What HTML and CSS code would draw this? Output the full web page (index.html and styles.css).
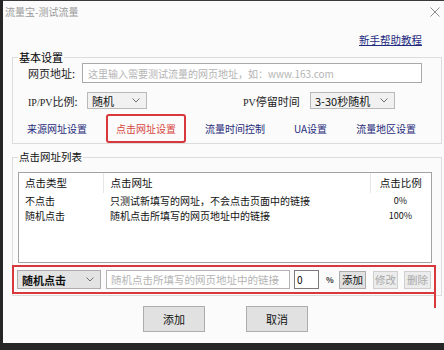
FILE: index.html
```html
<!DOCTYPE html>
<html lang="zh-CN">
  <head>
    <meta charset="UTF-8" />
    <title>流量宝-测试流量</title>
    <link rel="stylesheet" href="styles.css">
  </head>
  <body>
    <div class="window">
      <div class="titlebar">
        <span class="title">流量宝-测试流量</span>
        <svg class="close" width="10" height="10" viewBox="0 0 10 10" aria-label="关闭">
          <path d="M0.5 0.5L9.5 9.5M9.5 0.5L0.5 9.5" stroke="#8c8c8c" stroke-width="1" fill="none" />
        </svg>
      </div>

      <div class="help-row">
        <a href="#" class="help-link">新手帮助教程</a>
      </div>

      <fieldset class="group group-basic">
        <legend class="legend-basic">基本设置</legend>

        <div class="form-row row-url">
          <label for="url-input" class="field-label url-label">网页地址:</label>
          <input type="text" id="url-input" class="url-input" placeholder="这里输入需要测试流量的网页地址，如：www.163.com" />
        </div>

        <div class="form-row row-ratio">
          <label class="field-label ratio-label"><span class="latin">IP/PV</span>比例:</label>
          <div class="combo combo-ratio">
            <span>随机</span>
            <svg width="8" height="5" viewBox="0 0 8 5"><path d="M0.5 0.5L4 4L7.5 0.5" stroke="#707070" fill="none" /></svg>
          </div>
          <label class="field-label stay-label"><span class="latin">PV</span>停留时间</label>
          <div class="combo combo-stay">
            <span>3-30秒随机</span>
            <svg width="8" height="5" viewBox="0 0 8 5"><path d="M0.5 0.5L4 4L7.5 0.5" stroke="#707070" fill="none" /></svg>
          </div>
        </div>

        <div class="tabs">
          <a href="#" class="tab">来源网址设置</a>
          <a href="#" class="tab active">点击网址设置</a>
          <a href="#" class="tab">流量时间控制</a>
          <a href="#" class="tab">UA设置</a>
          <a href="#" class="tab">流量地区设置</a>
        </div>
      </fieldset>

      <fieldset class="group group-list">
        <legend>点击网址列表</legend>

        <div class="url-list">
          <table>
            <colgroup>
              <col class="col-type" />
              <col class="col-url" />
              <col class="col-rate" />
            </colgroup>
            <thead>
              <tr>
                <th class="cell-type">点击类型</th>
                <th class="cell-url">点击网址</th>
                <th class="cell-rate">点击比例</th>
              </tr>
            </thead>
            <tbody>
              <tr class="first-row">
                <td class="cell-type">不点击</td>
                <td class="cell-url">只测试新填写的网址，不会点击页面中的链接</td>
                <td class="cell-rate">0%</td>
              </tr>
              <tr>
                <td class="cell-type">随机点击</td>
                <td class="cell-url">随机点击所填写的网页地址中的链接</td>
                <td class="cell-rate">100%</td>
              </tr>
            </tbody>
          </table>
        </div>

        <div class="edit-row">
          <div class="combo combo-click">
            <span>随机点击</span>
            <svg width="8" height="5" viewBox="0 0 8 5"><path d="M0.5 0.5L4 4L7.5 0.5" stroke="#707070" fill="none" /></svg>
          </div>
          <input type="text" class="link-input" placeholder="随机点击所填写的网页地址中的链接" />
          <input type="text" class="rate-input" value="0" />
          <span class="percent">%</span>
          <button class="small-button add-button">添加</button>
          <button class="small-button edit-button" disabled>修改</button>
          <button class="small-button delete-button" disabled>删除</button>
        </div>
      </fieldset>

      <div class="dialog-buttons">
        <button class="dialog-button">添加</button>
        <button class="dialog-button">取消</button>
      </div>
    </div>
  </body>
</html>
```

FILE: styles.css
```css
* {
  box-sizing: border-box;
}

body {
  margin: 0;
  background: #262626;
  font-family: "Noto Sans CJK SC", "Liberation Sans", sans-serif;
  font-size: 10px;
  color: #111;
}

input,
button {
  font-family: inherit;
}

.window {
  margin-left: 3px;
  width: 441px;
  height: 343px;
  background: #fbfbfb;
  border-top: 1px solid #3a3a3a;
  overflow: hidden;
}

/* title bar */
.titlebar {
  height: 21px;
  display: flex;
  align-items: center;
  justify-content: space-between;
  padding: 0 4px 0 2px;
}

.title {
  color: #9a9a9a;
  font-size: 10px;
}

.help-row {
  height: 29px;
  padding: 12px 22px 0 0;
  text-align: right;
  line-height: 12px;
}

.help-link {
  color: #1f2b7e;
  font-size: 10.5px;
}

/* group boxes */
.group {
  margin: 0 0 0 9px;
  width: 430px;
  min-width: 0;
  padding: 0 0 0 5px;
  border: 1px solid #dcdcdc;
}

.group legend {
  padding: 0 1px;
  line-height: 12px;
  font-size: 10.5px;
  color: #111;
}

.group .legend-basic {
  font-size: 11px;
  color: #000;
}

.form-row {
  display: flex;
  align-items: center;
  padding-left: 10px;
}

.field-label {
  color: #222;
  font-size: 11px;
  white-space: nowrap;
}

.latin {
  font-family: "Liberation Serif", serif;
  font-size: 10px;
}

.row-url {
  height: 20px;
}

.url-label {
  width: 54px;
}

.url-input {
  width: 340px;
  height: 20px;
  border: 1px solid #a9a9a9;
  background: #fff;
  padding: 0 5px;
  font-size: 10px;
}

.url-input::placeholder,
.link-input::placeholder {
  color: #b4b4b4;
}

.row-ratio {
  margin-top: 9px;
  height: 17px;
}

.ratio-label {
  width: 59px;
}

.stay-label {
  margin-left: 96px;
  width: 67px;
}

.combo {
  height: 17px;
  display: flex;
  align-items: center;
  justify-content: space-between;
  padding: 0 6px 0 4px;
  background: #f1f1f1;
  border: 1px solid #b9b9b9;
  font-size: 11px;
  color: #111;
}

.combo-ratio {
  width: 60px;
}

.combo-stay {
  width: 85px;
}

/* tab links */
.tabs {
  margin: 5px 0 0 -1px;
  height: 29px;
  display: flex;
  gap: 9px;
}

.tab {
  padding: 0 8px;
  border: 2px solid transparent;
  border-radius: 3px;
  line-height: 25px;
  color: #1f2a7a;
  text-decoration: none;
  font-size: 10px;
}

.tab.active {
  border-color: #d8383c;
  color: #d6453f;
}

/* click url list */
.group-list {
  margin-top: 7px;
  padding-bottom: 1px;
}

.url-list {
  margin-top: 9px;
  width: 414px;
  height: 91px;
  border: 1px solid #a3a3a3;
  background: #fff;
}

.url-list table {
  width: 100%;
  border-collapse: collapse;
  table-layout: fixed;
}

.col-type {
  width: 84px;
}

.col-url {
  width: 267px;
}

.url-list th {
  height: 20px;
  line-height: 20px;
  padding: 0;
  font-weight: normal;
  text-align: left;
  font-size: 10.5px;
}

.url-list th + th {
  border-left: 1px solid #e6e6e6;
}

.url-list td {
  padding: 0;
  line-height: 14.5px;
  font-size: 10px;
  white-space: nowrap;
}

.url-list .first-row td {
  padding-top: 1px;
}

.cell-type {
  padding-left: 6px !important;
}

.cell-url {
  padding-left: 7px !important;
}

.url-list .cell-rate {
  text-align: center;
}

.url-list td.cell-rate {
  font-size: 9px;
}

/* edit row (highlighted) */
.edit-row {
  position: relative;
  margin: 2px 0 0 -6px;
  width: 424px;
  height: 29px;
  display: flex;
  align-items: center;
  padding-left: 3px;
  border: 2px solid #d8383c;
}

.edit-row::after {
  content: "";
  position: absolute;
  right: -2px;
  top: 100%;
  width: 2px;
  height: 16px;
  background: #d8383c;
}

.combo-click {
  width: 84px;
  height: 19px;
  background: #e3e3e3;
  border-color: #adadad;
  font-size: 11px;
  font-weight: bold;
}

.link-input {
  margin-left: 5px;
  width: 184px;
  height: 19px;
  border: 1px solid #b4b4b4;
  background: #fff;
  padding: 0 4px;
  font-size: 10.5px;
}

.rate-input {
  margin-left: 4px;
  width: 25px;
  height: 19px;
  border: 1px solid #7a7a7a;
  background: #fff;
  padding: 0 2px;
  font-size: 10px;
}

.percent {
  margin-left: 7px;
  width: 8px;
  font-size: 8px;
  font-weight: bold;
  color: #333;
}

.small-button {
  height: 18px;
  padding: 0;
  border: 1px solid #adadad;
  background: #e1e1e1;
  font-size: 10.5px;
  color: #111;
}

.add-button {
  margin-left: 5px;
  width: 27px;
}

.edit-button {
  margin-left: 7px;
  width: 25px;
}

.delete-button {
  margin-left: 6px;
  width: 27px;
}

.small-button:disabled {
  background: #ececec;
  border-color: #cfcfcf;
  color: #a8a8a8;
}

/* dialog buttons */
.dialog-buttons {
  margin-top: 10px;
  display: flex;
  justify-content: center;
  gap: 41px;
  padding-left: 4px;
}

.dialog-button {
  width: 62px;
  height: 26px;
  padding: 0;
  border: 1px solid #adadad;
  background: #e1e1e1;
  font-size: 11px;
  color: #111;
}
```
